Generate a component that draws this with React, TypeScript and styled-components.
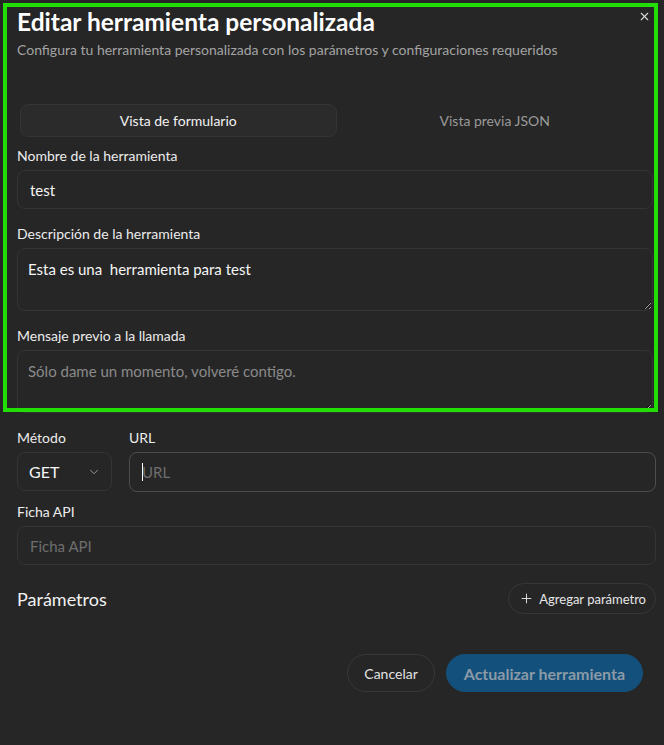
import styled, { createGlobalStyle } from 'styled-components';
import { ChevronDown, Plus, X } from 'lucide-react';

const GlobalStyle = createGlobalStyle`
  html, body {
    margin: 0;
    padding: 0;
    background: #262626;
  }
  body {
    font-family: Lato, "Noto Sans", sans-serif;
    color: #ececec;
  }
  * {
    box-sizing: border-box;
  }
`;

const Dialog = styled.div`
  position: relative;
  width: 664px;
  height: 745px;
  padding: 7px 8px 0 17px;
  background: #262626;
  overflow: hidden;
`;

const Highlight = styled.div`
  position: absolute;
  left: 3px;
  top: 3px;
  width: 655px;
  height: 409px;
  border: 4px solid #22dd06;
  pointer-events: none;
  z-index: 5;
`;

const CloseButton = styled.button`
  position: absolute;
  top: 9px;
  right: 13px;
  width: 14px;
  height: 14px;
  padding: 0;
  border: none;
  background: none;
  color: #d8d8d8;
  display: flex;
  align-items: center;
  justify-content: center;
  z-index: 6;
`;

const Title = styled.h1`
  margin: 0;
  font-size: 24.5px;
  line-height: 29px;
  font-weight: 700;
  color: #ffffff;
`;

const Subtitle = styled.p`
  margin: 4px 0 0;
  font-size: 14px;
  line-height: 20px;
  color: #a3a3a3;
`;

const ScrollArea = styled.div`
  padding-right: 3px;
`;

const TabList = styled.div`
  margin-top: 41px;
  display: grid;
  grid-template-columns: 1fr 1fr;
  padding: 3px;
`;

const Tab = styled.div<{ $active?: boolean }>`
  height: 33px;
  display: flex;
  align-items: center;
  justify-content: center;
  border-radius: 8px;
  font-size: 14px;
  color: ${(p) => (p.$active ? '#f2f2f2' : '#9a9a9a')};
  background: ${(p) => (p.$active ? '#2b2b2b' : 'transparent')};
  border: 1px solid ${(p) => (p.$active ? '#343434' : 'transparent')};
`;

const Field = styled.div<{ $gap?: number }>`
  margin-top: ${(p) => p.$gap ?? 16}px;
  display: flex;
  flex-direction: column;
  flex: 1;
`;

const Label = styled.label`
  font-size: 14px;
  line-height: 17px;
  color: #ececec;
  margin-bottom: 6px;
`;

const InputWrap = styled.div`
  position: relative;
`;

const Caret = styled.span`
  position: absolute;
  left: 13px;
  top: 11px;
  width: 1px;
  height: 18px;
  background: #ffffff;
`;

const TextInput = styled.input<{ $focused?: boolean }>`
  height: ${(p) => (p.$focused ? 40 : 39)}px;
  width: 100%;
  padding: 0 12px;
  border: 1px solid ${(p) => (p.$focused ? '#4d4d4d' : '#343434')};
  border-radius: 8px;
  background: #262626;
  color: #f5f5f5;
  font-family: Lato, "Noto Sans", sans-serif;
  font-size: 15px;
  outline: none;
  &::placeholder {
    color: #6e6e6e;
  }
`;

const TextArea = styled.textarea`
  display: block;
  height: 63px;
  width: 100%;
  padding: 10px 10px;
  border: 1px solid #343434;
  border-radius: 8px;
  background: #262626;
  color: #f5f5f5;
  font-family: Lato, "Noto Sans", sans-serif;
  font-size: 15px;
  line-height: 20px;
  outline: none;
  resize: vertical;
  &::placeholder {
    color: #8a8a8a;
  }
`;

const Row = styled.div`
  display: flex;
  gap: 17px;
  align-items: flex-start;
`;

const Select = styled.div`
  width: 95px;
  height: 39px;
  padding: 0 10px 0 11px;
  border: 1px solid #343434;
  border-radius: 8px;
  display: flex;
  align-items: center;
  justify-content: space-between;
  font-size: 16px;
  color: #f5f5f5;
  svg {
    color: #a8a8a8;
  }
`;

const ParamsHeader = styled.div`
  margin-top: 18px;
  display: flex;
  align-items: center;
  justify-content: space-between;
`;

const SectionTitle = styled.h2`
  margin: 0;
  font-size: 18px;
  font-weight: 400;
  color: #f2f2f2;
`;

const PillButton = styled.button`
  height: 31px;
  padding: 0 9px 0 10px;
  display: flex;
  align-items: center;
  gap: 5px;
  border: 1px solid #363636;
  border-radius: 999px;
  background: transparent;
  color: #e6e6e6;
  font-family: Lato, "Noto Sans", sans-serif;
  font-size: 13px;
`;

const Footer = styled.div`
  margin-top: 40px;
  margin-right: 13px;
  display: flex;
  justify-content: flex-end;
  gap: 11px;
`;

const FooterButton = styled.button<{ $primary?: boolean }>`
  height: 38px;
  padding: 0 ${(p) => (p.$primary ? 17 : 16)}px;
  border-radius: 999px;
  font-family: Lato, "Noto Sans", sans-serif;
  font-size: ${(p) => (p.$primary ? 16 : 14)}px;
  font-weight: ${(p) => (p.$primary ? 700 : 400)};
  color: ${(p) => (p.$primary ? '#8a9aa7' : '#e2e2e2')};
  background: ${(p) => (p.$primary ? '#14507c' : 'transparent')};
  border: 1px solid ${(p) => (p.$primary ? '#14507c' : '#383838')};
`;

export default function App() {
  return (
    <>
      <GlobalStyle />
      <Dialog>
        <Highlight />
        <CloseButton>
          <X size={13} strokeWidth={2} />
        </CloseButton>
        <Title>Editar herramienta personalizada</Title>
        <Subtitle>
          Configura tu herramienta personalizada con los parámetros y configuraciones requeridos
        </Subtitle>

        <TabList>
          <Tab $active>Vista de formulario</Tab>
          <Tab>Vista previa JSON</Tab>
        </TabList>

        <ScrollArea>
          <Field $gap={7}>
            <Label>Nombre de la herramienta</Label>
            <TextInput defaultValue="test" />
          </Field>
          <Field>
            <Label>Descripción de la herramienta</Label>
            <TextArea defaultValue="Esta es una  herramienta para test" />
          </Field>
          <Field>
            <Label>Mensaje previo a la llamada</Label>
            <TextArea placeholder="Sólo dame un momento, volveré contigo." />
          </Field>
        </ScrollArea>

        <Row>
          <Field style={{ flex: '0 0 95px' }}>
            <Label>Método</Label>
            <Select>
              GET
              <ChevronDown size={14} strokeWidth={1.5} />
            </Select>
          </Field>
          <Field>
            <Label>URL</Label>
            <InputWrap>
              <TextInput $focused placeholder="URL" />
              <Caret />
            </InputWrap>
          </Field>
        </Row>
        <Field $gap={11}>
          <Label>Ficha API</Label>
          <TextInput placeholder="Ficha API" />
        </Field>

        <ParamsHeader>
          <SectionTitle>Parámetros</SectionTitle>
          <PillButton>
            <Plus size={15} strokeWidth={1.5} />
            Agregar parámetro
          </PillButton>
        </ParamsHeader>

        <Footer>
          <FooterButton>Cancelar</FooterButton>
          <FooterButton $primary>Actualizar herramienta</FooterButton>
        </Footer>
      </Dialog>
    </>
  );
}
